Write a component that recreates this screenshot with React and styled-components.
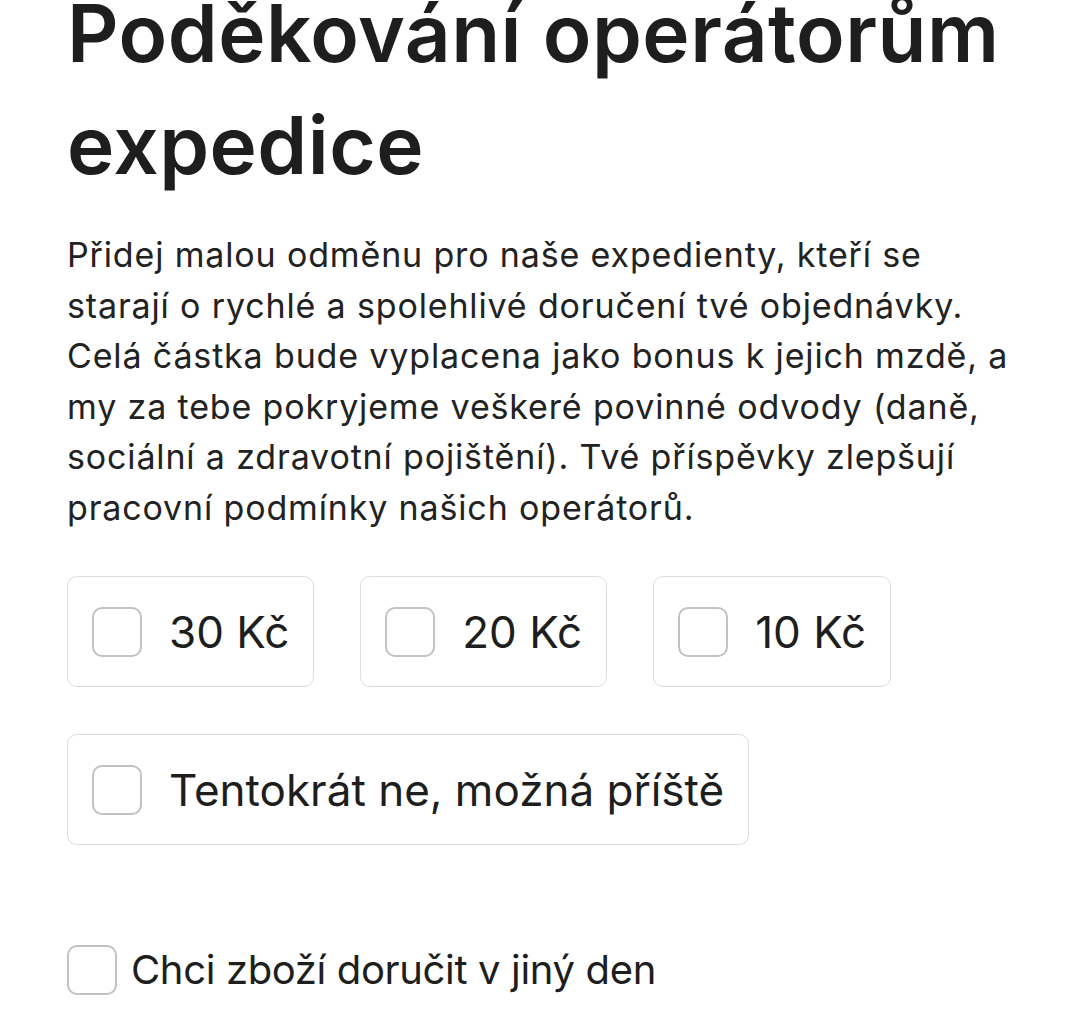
import styled, { createGlobalStyle } from "styled-components"

const GlobalStyle = createGlobalStyle`
    body {
        margin: 0;
        background: #ffffff;
        font-family: 'Inter', 'Noto Sans', sans-serif;
        color: #1e1e1e;
        overflow: hidden;
    }
`

const amounts = ['30 Kč', '20 Kč', '10 Kč']

const paragraphLines = [
    'Přidej malou odměnu pro naše expedienty, kteří se',
    'starají o rychlé a spolehlivé doručení tvé objednávky.',
    'Celá částka bude vyplacena jako bonus k jejich mzdě, a',
    'my za tebe pokryjeme veškeré povinné odvody (daně,',
    'sociální a zdravotní pojištění). Tvé příspěvky zlepšují',
    'pracovní podmínky našich operátorů.',
]

export default function App() {
    return (
        <>
            <GlobalStyle />
            <Page>
                <Title>
                    Poděkování operátorům
                    <br />
                    expedice
                </Title>
                <Description>
                    {paragraphLines.map((line, i) => (
                        <span key={i}>{line}</span>
                    ))}
                </Description>
                <AmountsRow>
                    {amounts.map((amount) => (
                        <OptionCard key={amount}>
                            <CheckBox />
                            <OptionLabel>{amount}</OptionLabel>
                        </OptionCard>
                    ))}
                </AmountsRow>
                <SkipRow>
                    <OptionCard>
                        <CheckBox />
                        <OptionLabel>Tentokrát ne, možná příště</OptionLabel>
                    </OptionCard>
                </SkipRow>
                <PlainOption>
                    <CheckBox />
                    <PlainLabel>Chci zboží doručit v jiný den</PlainLabel>
                </PlainOption>
            </Page>
        </>
    )
}

const Page = styled.main`
    display: flex;
    flex-direction: column;
    align-items: flex-start;
    padding: 0 40px 0 67px;
`

const Title = styled.h1`
    margin: -23px 0 0;
    font-size: 80px;
    line-height: 112px;
    font-weight: 600;
    letter-spacing: 0.5px;
    color: #1e1e1e;
    white-space: nowrap;
`

const Description = styled.p`
    display: flex;
    flex-direction: column;
    margin: 29px 0 0;
    font-size: 34px;
    line-height: 50.5px;
    font-weight: 400;
    letter-spacing: 0.85px;
    color: #222222;
    > span {
        white-space: nowrap;
    }
`

const AmountsRow = styled.div`
    display: flex;
    gap: 46px;
    margin-top: 43px;
`

const SkipRow = styled.div`
    display: flex;
    margin-top: 47px;
`

const OptionCard = styled.label`
    display: flex;
    align-items: center;
    gap: 27px;
    box-sizing: border-box;
    height: 111px;
    padding: 0 24px;
    border: 1.5px solid #dcdcdc;
    border-radius: 10px;
    background: #ffffff;
`

const CheckBox = styled.span`
    flex: none;
    box-sizing: border-box;
    width: 50px;
    height: 50px;
    border: 2px solid #c2c2c2;
    border-radius: 10px;
    background: #ffffff;
`

const OptionLabel = styled.span`
    font-size: 44px;
    line-height: 50px;
    letter-spacing: 0;
    color: #1e1e1e;
    white-space: nowrap;
`

const PlainOption = styled.label`
    display: flex;
    align-items: center;
    gap: 14px;
    margin-top: 100px;
`

const PlainLabel = styled.span`
    font-size: 40px;
    line-height: 50px;
    letter-spacing: -0.35px;
    color: #1e1e1e;
    white-space: nowrap;
`
